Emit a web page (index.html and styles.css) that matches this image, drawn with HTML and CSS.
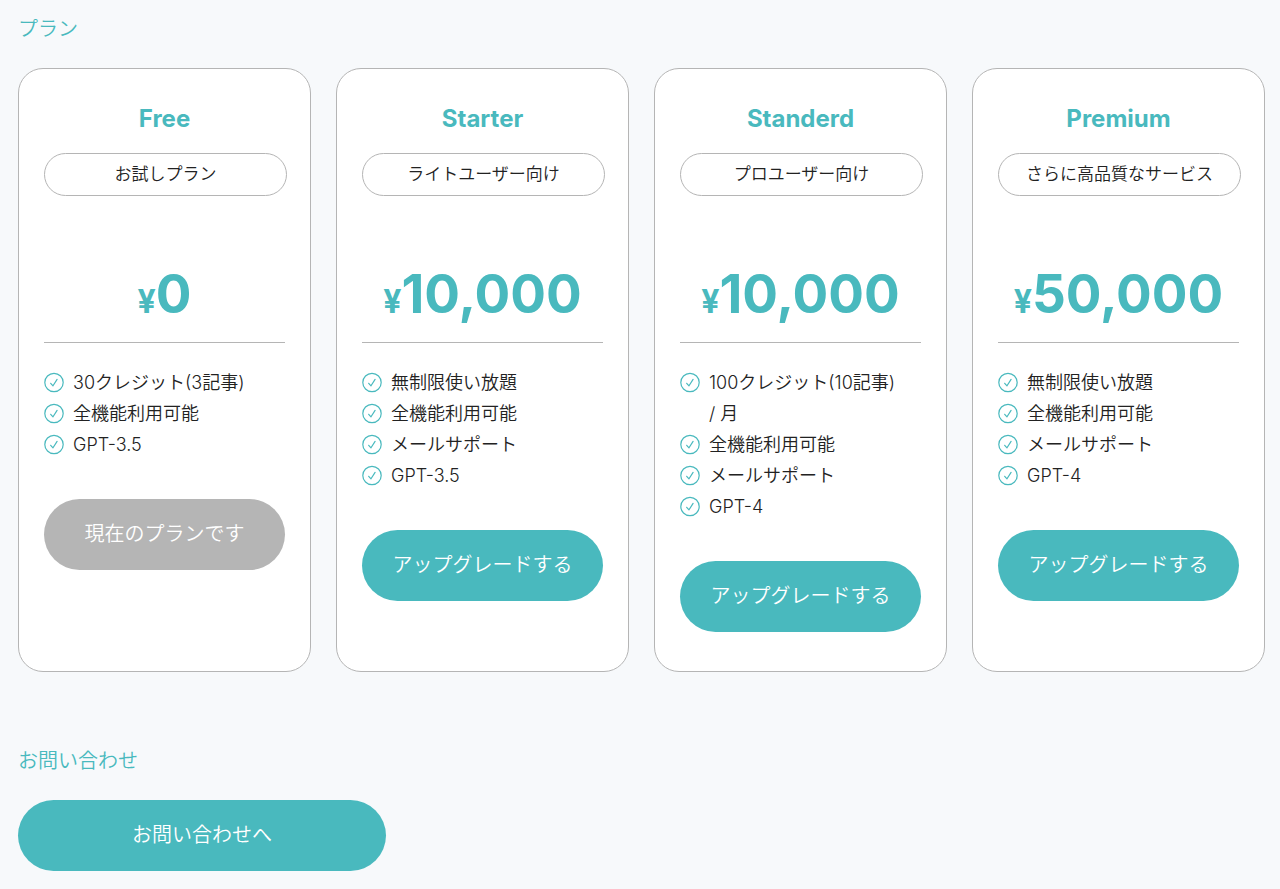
FILE: index.html
```
<!DOCTYPE html>
<html lang="ja">
<head>
    <meta charset="UTF-8">
    <meta name="viewport" content="width=device-width, initial-scale=1.0">
    <title>プラン</title>
    <link rel="stylesheet" href="styles.css">
</head>
<body>
    <!-- Check icon shared by the feature lists -->
    <svg class="sprite" aria-hidden="true">
        <symbol id="check" viewBox="0 0 20 20">
            <circle cx="10" cy="10" r="9.2"/>
            <path d="M6.7 10.8l2.3 2.5 4.1-6.4"/>
        </symbol>
    </svg>

    <section class="section">
        <h2 class="heading">プラン</h2>
        <div class="plans">
            <div class="plan">
                <h3 class="name">Free</h3>
                <p class="tag">お試しプラン</p>
                <p class="price"><span class="yen">¥</span>0</p>
                <ul class="features">
                    <li><svg class="icon"><use href="#check"/></svg><span>30クレジット(3記事)</span></li>
                    <li><svg class="icon"><use href="#check"/></svg><span>全機能利用可能</span></li>
                    <li><svg class="icon"><use href="#check"/></svg><span>GPT-3.5</span></li>
                </ul>
                <button type="button" class="button" disabled>現在のプランです</button>
            </div>
            <div class="plan">
                <h3 class="name">Starter</h3>
                <p class="tag">ライトユーザー向け</p>
                <p class="price"><span class="yen">¥</span>10,000</p>
                <ul class="features">
                    <li><svg class="icon"><use href="#check"/></svg><span>無制限使い放題</span></li>
                    <li><svg class="icon"><use href="#check"/></svg><span>全機能利用可能</span></li>
                    <li><svg class="icon"><use href="#check"/></svg><span>メールサポート</span></li>
                    <li><svg class="icon"><use href="#check"/></svg><span>GPT-3.5</span></li>
                </ul>
                <button type="button" class="button">アップグレードする</button>
            </div>
            <div class="plan">
                <h3 class="name">Standerd</h3>
                <p class="tag">プロユーザー向け</p>
                <p class="price"><span class="yen">¥</span>10,000</p>
                <ul class="features">
                    <li><svg class="icon"><use href="#check"/></svg><span>100クレジット(10記事) /&nbsp;月</span></li>
                    <li><svg class="icon"><use href="#check"/></svg><span>全機能利用可能</span></li>
                    <li><svg class="icon"><use href="#check"/></svg><span>メールサポート</span></li>
                    <li><svg class="icon"><use href="#check"/></svg><span>GPT-4</span></li>
                </ul>
                <button type="button" class="button">アップグレードする</button>
            </div>
            <div class="plan">
                <h3 class="name">Premium</h3>
                <p class="tag">さらに高品質なサービス</p>
                <p class="price"><span class="yen">¥</span>50,000</p>
                <ul class="features">
                    <li><svg class="icon"><use href="#check"/></svg><span>無制限使い放題</span></li>
                    <li><svg class="icon"><use href="#check"/></svg><span>全機能利用可能</span></li>
                    <li><svg class="icon"><use href="#check"/></svg><span>メールサポート</span></li>
                    <li><svg class="icon"><use href="#check"/></svg><span>GPT-4</span></li>
                </ul>
                <button type="button" class="button">アップグレードする</button>
            </div>
        </div>
    </section>

    <section class="section">
        <h2 class="heading">お問い合わせ</h2>
        <a href="/contact" class="button contact">お問い合わせへ</a>
    </section>
</body>
</html>
```

FILE: styles.css
```
* {
    box-sizing: border-box;
}

body {
    margin: 0;
    padding: 14px 15px 18px 18px;
    background-color: #f7f9fb;
    color: #222;
    font-family: Inter, "Noto Sans CJK JP", sans-serif;
    font-weight: 350;
}

h2, h3, p, ul {
    margin: 0;
    padding: 0;
}

.sprite {
    display: none;
}

.section + .section {
    margin-top: 74px;
}

.heading {
    margin-bottom: 24px;
    color: #49b9be;
    font-size: 20px;
    font-weight: 350;
    line-height: 30px;
}

/* Plan cards */
.plans {
    display: grid;
    grid-template-columns: repeat(4, 1fr);
    gap: 25px;
}

.plan {
    padding: 33px 25px 39px;
    border: 1px solid #b5b5b5;
    border-radius: 25px;
    background-color: #fff;
}

.name {
    color: #49b9be;
    font-size: 24px;
    font-weight: 700;
    line-height: 34px;
    text-align: center;
}

.tag {
    box-sizing: content-box;
    width: 100%;
    margin-top: 17px;
    border: 1px solid #b5b5b5;
    border-radius: 22px;
    font-size: 17px;
    line-height: 41px;
    text-align: center;
}

.price {
    margin-top: 61px;
    padding-bottom: 3px;
    border-bottom: 1px solid #b5b5b5;
    color: #49b9be;
    font-size: 53px;
    font-weight: 700;
    line-height: 74px;
    text-align: center;
}

.yen {
    font-size: 32px;
}

.features {
    margin: 24px 0 39px;
    list-style-type: none;
    font-size: 18px;
    line-height: 31px;
}

.features li {
    display: flex;
    gap: 9px;
}

.icon {
    flex: none;
    width: 20px;
    height: 31px;
    fill: none;
    stroke: #49b9be;
    stroke-width: 1.2;
    stroke-linecap: round;
    stroke-linejoin: round;
}

.button {
    display: block;
    width: 100%;
    padding: 0;
    border: none;
    border-radius: 36px;
    background-color: #49b9be;
    color: #fff;
    font-family: inherit;
    font-size: 20px;
    font-weight: 350;
    line-height: 71px;
    text-align: center;
    text-decoration: none;
    cursor: pointer;
}

.button:hover {
    background-color: #3da9ae;
}

.button:disabled {
    background-color: #b5b5b5;
    color: #fff;
    cursor: default;
}

.contact {
    max-width: 368px;
}

@media screen and (max-width: 1100px) {
    .plans {
        grid-template-columns: repeat(2, 1fr);
    }
}

@media screen and (max-width: 600px) {
    .plans {
        grid-template-columns: 1fr;
    }
}
```
